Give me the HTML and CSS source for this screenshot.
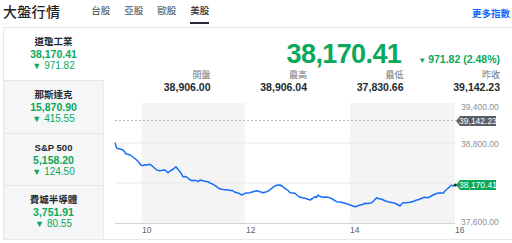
FILE: index.html
```html
<!DOCTYPE html>
<html lang="zh-Hant">
<head>
<meta charset="utf-8">
<title>大盤行情</title>
<link rel="stylesheet" href="styles.css">
</head>
<body>
<header class="header">
  <h1 class="title">大盤行情</h1>
  <nav class="tabs">
    <a class="tab">台股</a>
    <a class="tab">亞股</a>
    <a class="tab">歐股</a>
    <a class="tab active">美股</a>
  </nav>
  <a class="more">更多指數</a>
</header>
<section class="card">
  <aside class="side">
    <div class="item active">
      <div class="name">道瓊工業</div>
      <div class="val">38,170.41</div>
      <div class="chg"><span class="tri">▼</span>971.82</div>
    </div>
    <div class="item">
      <div class="name">那斯達克</div>
      <div class="val">15,870.90</div>
      <div class="chg"><span class="tri">▼</span>415.55</div>
    </div>
    <div class="item">
      <div class="name">S&amp;P 500</div>
      <div class="val">5,158.20</div>
      <div class="chg"><span class="tri">▼</span>124.50</div>
    </div>
    <div class="item">
      <div class="name">費城半導體</div>
      <div class="val">3,751.91</div>
      <div class="chg"><span class="tri">▼</span>80.55</div>
    </div>
  </aside>
  <div class="main">
    <div class="quote">
      <span class="big">38,170.41</span>
      <span class="bigchg"><span class="tri">▼</span>971.82 (2.48%)</span>
    </div>
    <div class="stats">
      <div class="stat"><div class="lbl">開盤</div><div class="num">38,906.00</div></div>
      <div class="stat"><div class="lbl">最高</div><div class="num">38,906.04</div></div>
      <div class="stat"><div class="lbl">最低</div><div class="num">37,830.66</div></div>
      <div class="stat"><div class="lbl">昨收</div><div class="num">39,142.23</div></div>
    </div>
    <svg class="chart" width="408" height="143" viewBox="104 96 408 143">
      <rect x="141.6" y="103" width="103.4" height="120" fill="#f4f4f4"/>
      <rect x="350" y="103" width="105" height="120" fill="#f4f4f4"/>
      <line x1="115" y1="143" x2="455" y2="143" stroke="#e9e9e9" stroke-width="1"/>
      <line x1="115" y1="183" x2="455" y2="183" stroke="#e9e9e9" stroke-width="1"/>
      <line x1="115" y1="223.5" x2="455" y2="223.5" stroke="#d4d4d4" stroke-width="1"/>
      <line x1="115" y1="120.5" x2="456" y2="120.5" stroke="#a8a8a8" stroke-width="0.8" stroke-dasharray="2 2"/>
      <polyline fill="none" stroke="#1a6ef5" stroke-width="1.5" stroke-linejoin="round"
        points="115,142.7 116.7,148 118,148.5 120,149 123,150 124.5,151.5 126,154 128,154.3 130,155 133,157 136.7,160 139,162.5 140.7,165 143,165.7 144.5,164.8 146.7,165 148.5,164.6 150,164.3 153,166.7 155,168.5 156.7,170 160,170.7 162.5,170.3 165,170 168,172.7 170,171 171.7,170 174,168.5 176,166.7 178,169.5 180,171.7 183,176.7 185,176.5 187,177.3 189,179 191.7,180.7 194,180.2 196.7,180.7 198,181.8 200,180 203,180.7 205,181.2 208,181.7 210,183 213,184.3 216.7,186.7 219,188.5 221.7,189.3 225,189.7 228,190 233,190.7 234.5,192 236.7,192.7 239,193.3 241.7,195 245,193.3 247.5,193 250,192.7 253,191.8 256.7,190.7 260,191.8 263,192.7 266.7,191.7 269,190.5 271.7,188.3 274,186.5 276.7,185.3 280,185 282.5,186.5 285,188.3 288,190.5 290,192.7 295,193.3 297.5,195.5 300,197.3 305,198.3 310,200 312.5,198.5 315,196.7 316.5,197.5 318,195 320,196.5 323,197.3 326,197 330,197.7 333,199.5 336.7,201.7 340,202 343,202.7 346,203.5 350,205 355,206.7 357.5,206 360,205 362.5,204.5 365,203.3 368,203.5 371.7,202.7 374,200.5 376.7,197.7 379,198.8 381.7,199.3 385,200.8 388,201.7 391.5,202.5 395,203.3 397.5,204.5 400,206 401.5,204 403,202.7 406,202.7 410,202.3 413,201.5 416.7,200 419,199.5 421.7,198.3 424.5,197.3 428,197.7 430.5,196.5 433,195 436.5,193.5 440,192.7 443,193.3 445.5,190.5 448,188.3 450,186.5 451.7,185 453,186 455,185"/>
      <circle cx="455.5" cy="185" r="1.6" fill="#222"/>
      <text class="ylab" x="461" y="110">39,400.00</text>
      <text class="ylab" x="461" y="147">38,800.00</text>
      <text class="ylab" x="461" y="224.5">37,600.00</text>
      <path d="M456 121 L460 116 H496 V126 H460 Z" fill="#5b6068"/>
      <text class="tag" x="478" y="124">39,142.23</text>
      <path d="M456 185 L460 180 H496 V190 H460 Z" fill="#0aa95a"/>
      <text class="tag" x="478" y="188">38,170.41</text>
      <text class="xlab" x="142" y="233">10</text>
      <text class="xlab" x="246" y="233">12</text>
      <text class="xlab" x="350" y="233">14</text>
      <text class="xlab" x="455" y="233">16</text>
    </svg>
  </div>
</section>
</body>
</html>
```

FILE: styles.css
```css
* { box-sizing: border-box; }
html, body { margin: 0; padding: 0; background: #fff; }
body {
  width: 512px;
  height: 243px;
  overflow: hidden;
  font-family: "Liberation Sans", "Noto Sans CJK TC", sans-serif;
  color: #232a31;
}
.header {
  display: flex;
  align-items: center;
  height: 27px;
  padding: 0 2px 0 3px;
}
.title {
  margin: 0 0 3px 0;
  font-size: 14px;
  font-weight: 500;
  letter-spacing: 0.3px;
  color: #1d2228;
  line-height: 20px;
}
.tabs {
  display: flex;
  gap: 14px;
  margin-left: 31px;
  height: 27px;
  align-items: stretch;
}
.tab {
  display: flex;
  align-items: center;
  font-size: 9.5px;
  font-weight: 500;
  color: #5b636a;
  padding-bottom: 2px;
  border-bottom: 2px solid transparent;
  height: 24px;
}
.tab.active {
  color: #232a31;
  border-bottom-color: #232a31;
}
.more {
  margin-left: auto;
  font-size: 9.5px;
  font-weight: 700;
  color: #0f69ff;
  padding-bottom: 2px;
}
.card {
  display: flex;
  margin-left: 3px;
  margin-right: -4px;
  border: 1px solid #e6e8ea;
  height: 213px;
}
.side {
  width: 100px;
  display: flex;
  flex-direction: column;
}
.item {
  height: 53px;
  padding-top: 8px;
  text-align: center;
  background: #f5f6f7;
  border-bottom: 1px solid #e3e6e9;
  border-right: 1px solid #e9ebed;
  line-height: 12px;
}
.item.active {
  background: #fff;
  border-right-color: #fff;
}
.item:last-child { border-bottom: none; }
.name {
  font-size: 9.5px;
  color: #232a31;
  font-weight: 700;
}
.val {
  font-size: 10.5px;
  font-weight: 700;
  color: #0aa95a;
}
.chg {
  font-size: 10px;
  color: #0aa95a;
}
.tri {
  font-size: 9px;
  margin-right: 3px;
}
.main {
  flex: 1;
  display: flex;
  flex-direction: column;
}
.quote {
  display: flex;
  justify-content: flex-end;
  align-items: baseline;
  gap: 17px;
  padding: 11px 15px 0 0;
  height: 41px;
}
.big {
  font-size: 27px;
  font-weight: 700;
  letter-spacing: -0.6px;
  color: #0aa95a;
  line-height: 30px;
}
.bigchg {
  font-size: 10.5px;
  font-weight: 700;
  color: #0aa95a;
}
.bigchg .tri {
  font-size: 8px;
  margin-right: 2px;
}
.stats {
  display: grid;
  grid-template-columns: repeat(4, 1fr);
  padding: 0 15px 0 10px;
  text-align: right;
  height: 27px;
}
.lbl {
  font-size: 9px;
  color: #6e7780;
  line-height: 12px;
}
.num {
  font-size: 10.5px;
  font-weight: 700;
  color: #232a31;
  line-height: 13px;
}
.chart { display: block; }
.ylab {
  font-size: 8.5px;
  fill: #8a9199;
  font-family: "Liberation Sans", sans-serif;
}
.xlab {
  font-size: 8.5px;
  fill: #5b636a;
  font-family: "Liberation Sans", sans-serif;
}
.tag {
  font-size: 8.5px;
  fill: #fff;
  text-anchor: middle;
  font-family: "Liberation Sans", sans-serif;
}
```
